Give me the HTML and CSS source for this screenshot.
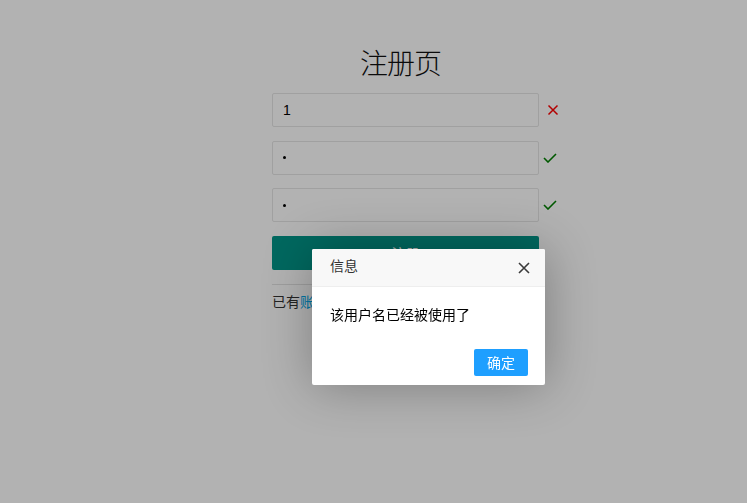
FILE: index.html
```html
<!DOCTYPE html>
<html lang="zh-CN">
<head>
<meta charset="utf-8">
<title>注册页</title>
<link rel="stylesheet" href="styles.css">
</head>
<body>
<div class="page">
  <h1 class="title">注册页</h1>
  <form class="form">
    <div class="row">
      <div class="input">1</div>
      <span class="mark">
        <svg width="12" height="12" viewBox="0 0 12 12"><path d="M1.5 1.5 L10.5 10.5 M10.5 1.5 L1.5 10.5" stroke="#ff0000" stroke-width="1.5" fill="none"/></svg>
      </span>
    </div>
    <div class="row">
      <div class="input"><span class="dot"></span></div>
      <span class="mark ok">
        <svg width="14" height="10" viewBox="0 0 14 10"><path d="M1 5 L5 9 L13 1" stroke="#008000" stroke-width="1.6" fill="none"/></svg>
      </span>
    </div>
    <div class="row">
      <div class="input"><span class="dot"></span></div>
      <span class="mark ok">
        <svg width="14" height="10" viewBox="0 0 14 10"><path d="M1 5 L5 9 L13 1" stroke="#008000" stroke-width="1.6" fill="none"/></svg>
      </span>
    </div>
    <div class="btn-main">注册</div>
    <hr class="line">
    <p class="login">已有<a href="#">账号，去登录</a></p>
  </form>
</div>
<div class="shade"></div>
<div class="layer">
  <div class="layer-title">信息
    <span class="layer-close">
      <svg width="12" height="12" viewBox="0 0 12 12"><path d="M1 1 L11 11 M11 1 L1 11" stroke="#3b3b3b" stroke-width="1.6" fill="none"/></svg>
    </span>
  </div>
  <div class="layer-content">该用户名已经被使用了</div>
  <div class="layer-btns"><span class="layer-btn">确定</span></div>
</div>
</body>
</html>
```
FILE: styles.css
```css
html, body {
  margin: 0;
  padding: 0;
  background: #fff;
  font-family: "Noto Sans CJK SC", "Liberation Sans", sans-serif;
  color: #333;
  font-size: 14px;
}
.page {
  width: 267px;
  margin-left: 272px;
  padding-top: 42px;
}
.title {
  margin: 0 0 11px 0;
  padding-right: 10px;
  font-size: 28px;
  font-weight: 300;
  line-height: 40px;
  height: 40px;
  text-align: center;
  color: #111;
  letter-spacing: -1px;
}
.form {
  margin: 0;
}
.row {
  position: relative;
  height: 34px;
  margin-bottom: 13.67px;
}
.input {
  box-sizing: border-box;
  height: 34px;
  border: 1px solid #e6e6e6;
  border-radius: 2px;
  background: #fff;
  padding-left: 10px;
  line-height: 32px;
  font-family: "Liberation Sans", sans-serif;
  font-size: 14px;
  color: #000;
}
.dot {
  display: inline-block;
  width: 3px;
  height: 3px;
  border-radius: 50%;
  background: #000;
  vertical-align: middle;
  margin-top: -2px;
}
.mark {
  position: absolute;
  left: 275px;
  top: 11px;
  line-height: 0;
}
.mark.ok {
  left: 271px;
  top: 12px;
}
.btn-main {
  height: 34px;
  line-height: 34px;
  background: #009688;
  color: #fff;
  text-align: center;
  border-radius: 2px;
  font-size: 14px;
}
.line {
  margin: 14px 0 0 0;
  border: 0;
  border-top: 1px solid #e2e2e2;
  height: 0;
}
.login {
  margin: 6px 0 0 0;
  line-height: 20px;
  color: #333;
}
.login a {
  color: #01AAED;
  text-decoration: none;
}
.shade {
  position: fixed;
  inset: 0;
  background: rgba(0, 0, 0, 0.3);
}
.layer {
  position: absolute;
  left: 312px;
  top: 249px;
  width: 233px;
  height: 136px;
  background: #fff;
  border-radius: 2px;
  box-shadow: 1px 1px 50px rgba(0, 0, 0, 0.3);
}
.layer-title {
  position: relative;
  height: 37px;
  line-height: 33px;
  padding-left: 18px;
  background: #f8f8f8;
  border-bottom: 1px solid #eee;
  border-radius: 2px 2px 0 0;
  color: #333;
  font-size: 14px;
}
.layer-close {
  position: absolute;
  right: 15px;
  top: 13px;
  line-height: 0;
}
.layer-content {
  padding: 15px 18px 0 18px;
  line-height: 24px;
  height: 41px;
  font-size: 14px;
  color: #000;
}
.layer-btns {
  display: flex;
  justify-content: flex-end;
  padding: 6px 17px 0 0;
}
.layer-btn {
  height: 27px;
  line-height: 27px;
  padding: 0 13px;
  background: #1E9FFF;
  color: #fff;
  border-radius: 2px;
  font-size: 14px;
}
```
